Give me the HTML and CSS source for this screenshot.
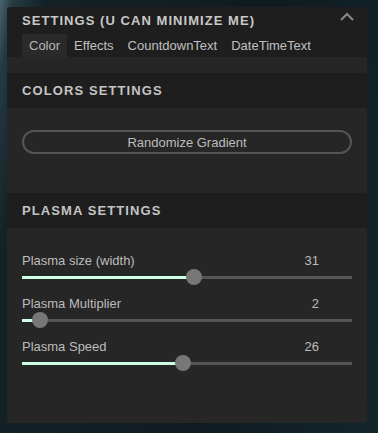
FILE: index.html
```html
<!DOCTYPE html>
<html lang="en">
<head>
<meta charset="UTF-8">
<meta name="viewport" content="width=device-width, initial-scale=1.0">
<title>Settings</title>
<link rel="stylesheet" href="styles.css">
</head>
<body>

<div class="panel">
    <div class="panelHead">
        <div class="titleRow">
            <span class="title">SETTINGS (U CAN MINIMIZE ME)</span>
            <svg class="chevron" width="16" height="10" viewBox="0 0 16 10">
                <polyline points="2,8 8,2 14,8" fill="none" stroke="#8a8a8a" stroke-width="2"/>
            </svg>
        </div>
        <div class="tabs">
            <span class="tab active">Color</span>
            <span class="tab">Effects</span>
            <span class="tab">CountdownText</span>
            <span class="tab">DateTimeText</span>
        </div>
    </div>

    <div class="panelBody">
        <div class="sectionHead">COLORS SETTINGS</div>
        <div class="sectionBody colors">
            <button class="pillBtn">Randomize Gradient</button>
        </div>

        <div class="sectionHead">PLASMA SETTINGS</div>
        <div class="sectionBody plasma">
            <div class="sliderRow">
                <div class="sliderLabel"><span>Plasma size (width)</span><span>31</span></div>
                <div class="slider">
                    <div class="fill" style="width: 52.1%"></div>
                    <div class="thumb" style="left: 52.1%"></div>
                </div>
            </div>
            <div class="sliderRow">
                <div class="sliderLabel"><span>Plasma Multiplier</span><span>2</span></div>
                <div class="slider">
                    <div class="fill" style="width: 5.5%"></div>
                    <div class="thumb" style="left: 5.5%"></div>
                </div>
            </div>
            <div class="sliderRow">
                <div class="sliderLabel"><span>Plasma Speed</span><span>26</span></div>
                <div class="slider">
                    <div class="fill" style="width: 48.8%"></div>
                    <div class="thumb" style="left: 48.8%"></div>
                </div>
            </div>
        </div>
    </div>
</div>

</body>
</html>
```

FILE: styles.css
```css
body {
    margin: 0;
    height: 433px;
    overflow: hidden;
    font-family: "Liberation Sans", Arial, sans-serif;
    background: linear-gradient(100deg, #4a6470 0%, #243a42 3%, #142228 10%, #0f1b20 60%, #12262c 100%);
    padding: 7px 11px 10px 7px;
    box-sizing: border-box;
}

.panel {
    width: 360px;
    height: 416px;
    background-color: #262626;
    border-radius: 4px;
    overflow: hidden;
}

.panelHead {
    background-color: #1e1e1e;
    padding: 0 12px 0 15px;
}

.titleRow {
    display: flex;
    justify-content: space-between;
    align-items: center;
    height: 27px;
}

.title {
    color: #c8c8c8;
    font-size: 13px;
    font-weight: bold;
    letter-spacing: 1.05px;
}

.chevron {
    margin-bottom: 8px;
}

.tabs {
    display: flex;
    height: 23px;
}

.tab {
    padding: 0 7px;
    line-height: 23px;
    font-size: 13px;
    color: #c0c0c0;
}

.tab.active {
    background-color: #2a2a2a;
    color: #b8b8b8;
}

.panelBody {
    padding-top: 16px;
}

.sectionHead {
    height: 35px;
    line-height: 36px;
    padding-left: 15px;
    background-color: #1e1e1e;
    color: #c4c4c4;
    font-size: 13px;
    font-weight: bold;
    letter-spacing: 1.1px;
}

.sectionBody {
    padding: 0 15px;
}

.sectionBody.colors {
    padding-top: 22px;
    height: 63px;
}

.pillBtn {
    display: block;
    width: 100%;
    height: 24px;
    border: 2px solid #555;
    border-radius: 12px;
    background: transparent;
    color: #bdbdbd;
    font-family: "Liberation Sans", Arial, sans-serif;
    font-size: 13px;
    padding: 0;
}

.sectionBody.plasma {
    padding-top: 24px;
}

.sliderRow {
    margin-bottom: 10px;
}

.sliderLabel {
    display: flex;
    justify-content: space-between;
    padding-right: 33px;
    line-height: 17px;
    font-size: 13px;
    color: #bcbcbc;
}

.slider {
    position: relative;
    height: 16px;
    background: linear-gradient(#555, #555) no-repeat 0 7px / 100% 3px;
}

.fill {
    position: absolute;
    left: 0;
    top: 7px;
    height: 3px;
    background-color: #ccffe6;
}

.thumb {
    position: absolute;
    top: 0;
    width: 16px;
    height: 16px;
    margin-left: -8px;
    border-radius: 50%;
    background-color: #777;
}
```
